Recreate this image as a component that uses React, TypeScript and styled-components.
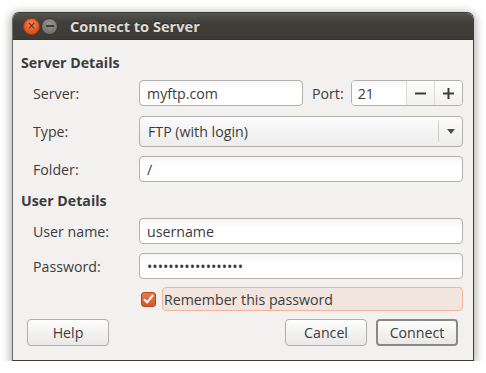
import React from "react";
import styled, { createGlobalStyle } from "styled-components";

const Global = createGlobalStyle`
  html, body { margin: 0; padding: 0; background: #ffffff; }
  body { font-family: "Open Sans", "Noto Sans", sans-serif; }
  * { box-sizing: border-box; }
`;

const Window = styled.div`
  margin: 12px 0 0 12px;
  width: 462px;
  height: 349px;
  display: flex;
  flex-direction: column;
  border-radius: 7px 7px 0 0;
  background: #f2f1f0;
  border: 1px solid #3c3b37;
  border-left-color: #6c6a66;
  border-right-color: #4a3a3a;
  box-shadow: 0 2px 9px 2px rgba(0,0,0,0.3);
  overflow: hidden;
`;

const TitleBar = styled.div`
  height: 27px;
  flex: none;
  display: flex;
  align-items: center;
  padding-left: 10px;
  background: linear-gradient(#55534e, #3f3e3a 40%, #3c3b37);
  border-bottom: 1px solid #353430;
`;

const WinButton = styled.div<{ $kind: "close" | "min" }>`
  width: 17px;
  height: 17px;
  border-radius: 50%;
  margin-right: 1px;
  display: flex;
  align-items: center;
  justify-content: center;
  border: 1px solid ${(p) => (p.$kind === "close" ? "#a33d12" : "#3a3935")};
  background: ${(p) =>
    p.$kind === "close"
      ? "radial-gradient(circle at 50% 35%, #f58a5c, #e2561f 60%, #c9461a)"
      : "radial-gradient(circle at 50% 35%, #99978f, #7a7873 60%, #64625d)"};
  color: #3b2a22;
  font-size: 10px;
  line-height: 1;
  font-family: "DejaVu Sans", sans-serif;
`;

const MinBar = styled.div`
  width: 8px;
  height: 2px;
  background: #3c3b37;
`;

const Title = styled.div`
  margin-left: 11px;
  color: #dfdbd2;
  font-weight: 700;
  font-size: 14.6px;
  text-shadow: 0 -1px 0 #2a2926;
`;

const Body = styled.div`
  flex: 1;
  padding: 14px 10px 0 8px;
  display: flex;
  flex-direction: column;
  color: #3c3c3c;
  font-size: 14.2px;
`;

const Heading = styled.div<{ $mt?: number }>`
  height: 18px;
  line-height: 18px;
  font-weight: 700;
  margin-top: ${(p) => p.$mt ?? 0}px;
  color: #3c3c3c;
`;

const Row = styled.div<{ $mt: number; $h: number }>`
  display: grid;
  grid-template-columns: 118px 1fr;
  align-items: center;
  margin-top: ${(p) => p.$mt}px;
  height: ${(p) => p.$h}px;
`;

const Label = styled.div`
  padding-left: 12px;
  color: #3c3c3c;
`;

const FieldWrap = styled.div`
  display: flex;
  align-items: center;
  height: 100%;
`;

const Entry = styled.div<{ $w?: number }>`
  height: 26px;
  ${(p) => (p.$w ? `width: ${p.$w}px;` : "flex: 1;")}
  border: 1px solid #b3b1ad;
  border-radius: 4px;
  background: linear-gradient(#f6f6f6, #ffffff 40%);
  display: flex;
  align-items: center;
  padding-left: 7px;
  color: #3c3c3c;
  white-space: nowrap;
  overflow: hidden;
`;

const PortLabel = styled.div`
  margin: 0 7px 0 9px;
`;

const Spin = styled.div`
  flex: 1;
  height: 26px;
  display: flex;
  border: 1px solid #b3b1ad;
  border-radius: 4px;
  overflow: hidden;
  background: #ffffff;
`;

const SpinEntry = styled.div`
  width: 54px;
  display: flex;
  align-items: center;
  padding-left: 6px;
  background: linear-gradient(#f6f6f6, #ffffff 40%);
`;

const SpinButton = styled.div`
  flex: 1;
  border-left: 1px solid #dcdad7;
  display: flex;
  align-items: center;
  justify-content: center;
  background: linear-gradient(#fdfdfd, #f1f1f0);
`;

const Combo = styled.div`
  flex: 1;
  height: 31px;
  border: 1px solid #b3b1ad;
  border-radius: 4px;
  background: linear-gradient(#fbfbfb, #ededec);
  display: flex;
  align-items: center;
  padding-left: 8px;
`;

const ComboText = styled.div`
  flex: 1;
`;

const ComboSep = styled.div`
  width: 1px;
  height: 21px;
  background: #cfcdca;
`;

const ComboArrow = styled.div`
  width: 23px;
  display: flex;
  justify-content: center;
`;

const CheckWrap = styled.div`
  display: flex;
  align-items: center;
  height: 100%;
  padding-left: 2px;
`;

const CheckBox = styled.div`
  width: 15px;
  height: 15px;
  border-radius: 3px;
  border: 1px solid #ad4a1f;
  background: linear-gradient(#e87a48, #d35a27);
  display: flex;
  align-items: center;
  justify-content: center;
  flex: none;
`;

const CheckLabel = styled.div`
  flex: 1;
  height: 24px;
  margin-left: 6px;
  border: 1px solid #f2b496;
  border-radius: 4px;
  background: #f2e4df;
  display: flex;
  align-items: center;
  padding-left: 1px;
`;

const ButtonRow = styled.div`
  display: flex;
  align-items: center;
  margin-top: 8px;
  height: 27px;
  padding-left: 6px;
  padding-right: 5px;
`;

const Spacer = styled.div`
  flex: 1;
`;

const Button = styled.div<{ $default?: boolean }>`
  width: 82px;
  height: 27px;
  margin-left: ${(p) => (p.$default ? 9 : 0)}px;
  border: ${(p) => (p.$default ? "2px solid #8b8986" : "1px solid #b0aeab")};
  border-radius: 4px;
  background: linear-gradient(#fdfdfd, #e9e8e6);
  display: flex;
  align-items: center;
  justify-content: center;
  color: #3c3c3c;
`;

export default function App() {
  return (
    <>
      <Global />
      <Window>
        <TitleBar>
          <WinButton $kind="close">×</WinButton>
          <WinButton $kind="min">
            <MinBar />
          </WinButton>
          <Title>Connect to Server</Title>
        </TitleBar>
        <Body>
          <Heading>Server Details</Heading>
          <Row $mt={8} $h={26}>
            <Label>Server:</Label>
            <FieldWrap>
              <Entry $w={164}>myftp.com</Entry>
              <PortLabel>Port:</PortLabel>
              <Spin>
                <SpinEntry>21</SpinEntry>
                <SpinButton>
                  <svg width="11" height="11" viewBox="0 0 11 11">
                    <rect x="0" y="4.5" width="11" height="2" fill="#3c3c3c" />
                  </svg>
                </SpinButton>
                <SpinButton>
                  <svg width="11" height="11" viewBox="0 0 11 11">
                    <rect x="0" y="4.5" width="11" height="2" fill="#3c3c3c" />
                    <rect x="4.5" y="0" width="2" height="11" fill="#3c3c3c" />
                  </svg>
                </SpinButton>
              </Spin>
            </FieldWrap>
          </Row>
          <Row $mt={10} $h={31}>
            <Label>Type:</Label>
            <FieldWrap>
              <Combo>
                <ComboText>FTP (with login)</ComboText>
                <ComboSep />
                <ComboArrow>
                  <svg width="8" height="5" viewBox="0 0 8 5">
                    <polygon points="0,0 8,0 4,5" fill="#4c4c4c" />
                  </svg>
                </ComboArrow>
              </Combo>
            </FieldWrap>
          </Row>
          <Row $mt={9} $h={26}>
            <Label>Folder:</Label>
            <FieldWrap>
              <Entry>/</Entry>
            </FieldWrap>
          </Row>
          <Heading $mt={10}>User Details</Heading>
          <Row $mt={8} $h={26}>
            <Label>User name:</Label>
            <FieldWrap>
              <Entry>username</Entry>
            </FieldWrap>
          </Row>
          <Row $mt={9} $h={26}>
            <Label>Password:</Label>
            <FieldWrap>
              <Entry>••••••••••••••••••</Entry>
            </FieldWrap>
          </Row>
          <Row $mt={8} $h={24}>
            <span />
            <CheckWrap>
              <CheckBox>
                <svg width="11" height="10" viewBox="0 0 11 10">
                  <path d="M1 5.2 L4.2 8.2 L10 1.2" stroke="#ffffff" strokeWidth="2" fill="none" />
                </svg>
              </CheckBox>
              <CheckLabel>Remember this password</CheckLabel>
            </CheckWrap>
          </Row>
          <ButtonRow>
            <Button>Help</Button>
            <Spacer />
            <Button>Cancel</Button>
            <Button $default>Connect</Button>
          </ButtonRow>
        </Body>
      </Window>
    </>
  );
}
